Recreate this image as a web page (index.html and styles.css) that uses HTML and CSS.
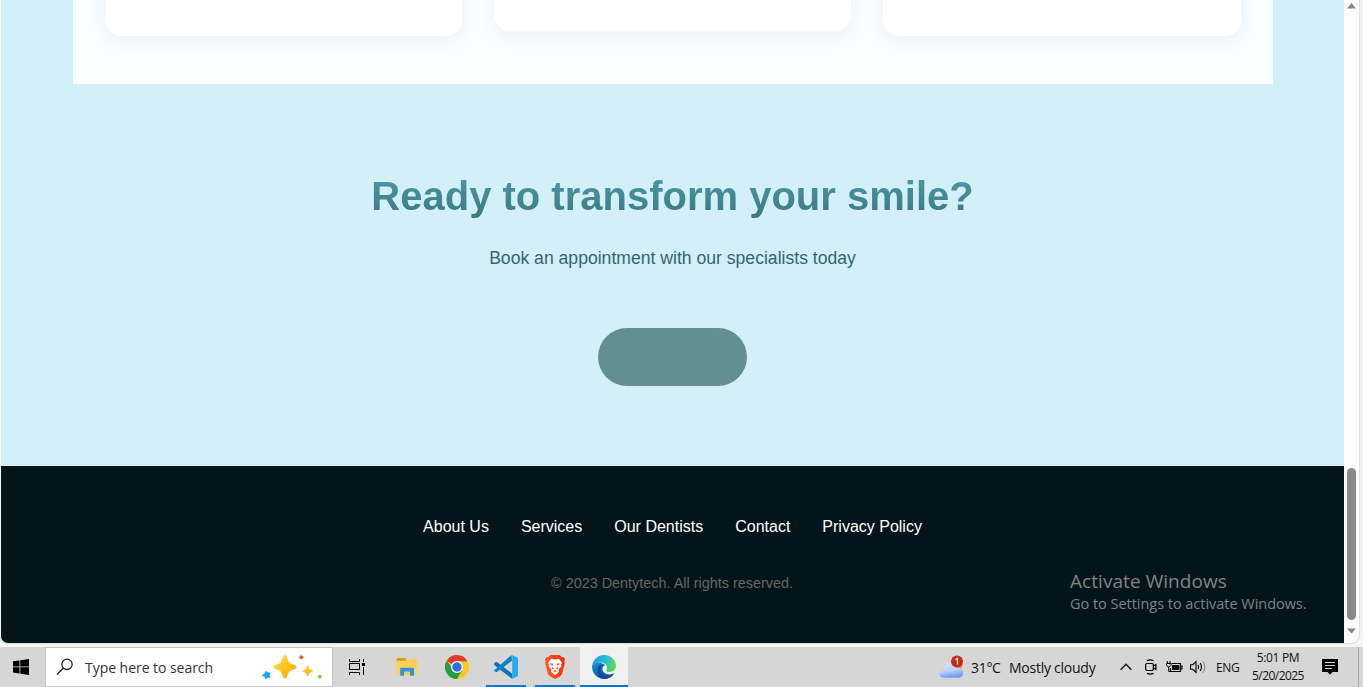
FILE: index.html
```html
<!DOCTYPE html>
<html lang="en">
<head>
<meta charset="utf-8">
<title>Dentytech</title>
<link rel="stylesheet" href="styles.css">
</head>
<body>
<div class="browser">
  <div class="page">
    <main class="content">
      <section class="cards">
        <div class="card"></div>
        <div class="card card-short"></div>
        <div class="card"></div>
      </section>
      <section class="cta">
        <h2 class="cta-title">Ready to transform your smile?</h2>
        <p class="cta-text">Book an appointment with our specialists today</p>
        <a class="cta-button"></a>
      </section>
    </main>
    <footer class="footer">
      <nav class="links">
        <a>About Us</a><a>Services</a><a>Our Dentists</a><a>Contact</a><a>Privacy Policy</a>
      </nav>
      <p class="copyright">© 2023 Dentytech. All rights reserved.</p>
    </footer>
  </div>
  <div class="scrollbar">
    <svg width="9" height="6" viewBox="0 0 9 6"><path d="M0 5.5 4.5 0 9 5.5z" fill="#858585"/></svg>
    <div class="thumb"></div>
    <svg width="9" height="6" viewBox="0 0 9 6"><path d="M0 .5 4.5 5.5 9 .5z" fill="#858585"/></svg>
  </div>
  <div class="watermark">
    <div class="wm-title">Activate Windows</div>
    <div class="wm-text">Go to Settings to activate Windows.</div>
  </div>
</div>
<div class="taskbar">
  <div class="start">
    <svg width="16" height="16" viewBox="0 0 16 16"><path d="M0 2.3 6.5 1.4V7.4H0zM7.3 1.3 16 0V7.4H7.3zM0 8.2H6.5V14.5L0 13.6zM7.3 8.2H16V16L7.3 14.7z"/></svg>
  </div>
  <div class="search">
    <svg class="glass" width="18" height="18" viewBox="0 0 18 18"><circle cx="11" cy="6.3" r="5.2" fill="none" stroke="#222" stroke-width="1.3"/><path d="M7.4 10.1 1 16.5" stroke="#222" stroke-width="1.4"/></svg>
    <span class="search-text">Type here to search</span>
    <svg class="sparkle" width="62" height="26" viewBox="0 0 62 26">
      <defs><linearGradient id="gold" x2="1" y2="1"><stop offset="0" stop-color="#ffe052"/><stop offset=".55" stop-color="#fdc01e"/><stop offset="1" stop-color="#efa30e"/></linearGradient></defs>
      <path d="M24 1C25.7 1 26.1 3.2 27.2 6.2 28 8.5 29 9.4 31.5 10.2 34 11 35.5 11.5 35.5 13S34 15 31.5 15.8C29 16.6 28 17.5 27.2 19.8 26.1 22.8 25.6 24.5 24 24.5S21.9 22.8 20.8 19.8C20 17.5 19 16.6 16.5 15.8 14 15 12.7 14.5 12.7 13S14 11 16.5 10.2C19 9.4 20 8.5 20.8 6.2 21.9 3.2 22.4 1 24 1z" fill="url(#gold)"/>
      <path d="M46.5 11.2C47.4 11.2 47.7 14.6 49 15.3 50.2 16 52.2 16 52.2 16.8S50.2 17.7 49 18.4C47.7 19.1 47.4 22 46.5 22S45.3 19.1 44 18.4C42.8 17.7 41.3 17.6 41.3 16.8S42.8 16 44 15.3C45.3 14.6 45.7 11.2 46.5 11.2z" fill="url(#gold)"/>
      <path d="M5.2 17 6.6 19 9.2 18.8 8.3 21.3 9.2 23.4 6.4 23.2 4.6 25 3.8 22.6 1.2 21.2 3.7 19.9z" fill="#18a7ee" stroke="#18a7ee" stroke-width=".8" stroke-linejoin="round"/>
      <circle cx="40.3" cy="3.2" r="2" fill="#f05d2d"/><circle cx="58.7" cy="22.8" r="2" fill="#8acb46"/>
    </svg>
  </div>
  <div class="app app-wide task-view">
    <svg width="17" height="16" viewBox="0 0 17 16" fill="none" stroke="#000" stroke-width="1"><path d="M1.5 0V2.5H11.5V0M1.5 16V13.5H11.5V16M1.5 4.5H11.5V10.5H1.5zM15.5 0V3M15.5 8V16"/><path d="M14 4H17V7H14z" fill="#000" stroke="none"/></svg>
  </div>
  <div class="app app-wide">
    <svg width="22" height="18" viewBox="0 0 22 18"><path d="M.3 2.3H9.5L11.2 1.2H20.5Q21.6 1.2 21.6 2.4V16Q21.6 17 20.6 17H1.3Q.3 17 .3 16z" fill="#ffd05a"/><path d="M.5 1Q.5 0 1.5 0H8.7Q10 0 10 1.2T8.8 2.8H.5z" fill="#de9a08"/><path d="M4.2 17.7V11Q4.2 9.7 5.4 9.7H16.7Q18 9.7 18 11V17.7H14V14.3Q14 13.4 13.2 13.4H9Q8.1 13.4 8.1 14.3V17.7z" fill="#3491dc"/></svg>
  </div>
  <div class="app app-wide">
    <svg width="24" height="24" viewBox="0 0 24 24"><circle cx="12" cy="12" r="12" fill="#fdc91c"/><path d="M12 12 1.6 6A12 12 0 0 1 22.4 6.2H12z" fill="#df3c2d"/><path d="M1.6 6A12 12 0 0 0 12 24L17.2 15H12Q8.5 15 6.8 12z" fill="#249b46"/><circle cx="12" cy="12" r="6" fill="#fff"/><circle cx="12" cy="12" r="4.7" fill="#2d6ee8"/></svg>
  </div>
  <div class="app running">
    <svg width="24" height="24" viewBox="0 0 24 24"><path d="M0 8.6 1.8 7.1Q2.6 6.7 3.3 7.2L18 18.4V23.8L.2 9.9Q-.4 9.2 0 8.6z" fill="#0876bb"/><path d="M0 15.5 17.5 0 18 5.7 3.3 16.8Q2.6 17.3 1.8 16.9L.2 15.9z" fill="#0b83c9"/><path d="M17.8 0 23.1 2.5Q24 3 24 4V20Q24 21 23.1 21.5L17.8 24Q18.2 23.5 18.2 22.5V1.5Q18.2.5 17.8 0z" fill="#29a8f2"/></svg>
  </div>
  <div class="app running">
    <svg width="20" height="24" viewBox="0 0 20 24"><defs><linearGradient id="brave"><stop stop-color="#ff5a20"/><stop offset="1" stop-color="#f72b0d"/></linearGradient></defs><path d="M5.3 0H14.7L16.8 2.2 18.5 2 20 4.3 19.3 6.3 19.8 8 17.2 18.2Q16.8 19.8 15.3 20.9L10 24 4.7 20.9Q3.2 19.8 2.8 18.2L.2 8 .7 6.3 0 4.3 1.5 2 3.2 2.2z" fill="url(#brave)"/><path d="M6.2 3.8 10 4.5 13.8 3.8 17 7.7 16 9.7 16.5 11.5 13.4 14.6 14 16.8 10 20.5 6 16.8 6.6 14.6 3.5 11.5 4 9.7 3 7.7z" fill="#fff"/><path d="M5.2 8.2 8.4 8.8 7.8 10.4 6.2 10zM14.8 8.2 11.6 8.8 12.2 10.4 13.8 10zM7.3 11.5 9 13.7 7.2 14.6zM12.7 11.5 11 13.7 12.8 14.6zM7.8 16 10 15.2 12.2 16 10 17z" fill="#fb401a"/></svg>
  </div>
  <div class="app active">
    <svg width="24" height="24" viewBox="0 0 24 24"><defs><linearGradient id="edgeTop" x1="0" x2="1" y1=".3" y2=".6"><stop stop-color="#2498dd"/><stop offset=".5" stop-color="#27bdd0"/><stop offset="1" stop-color="#63dc55"/></linearGradient><linearGradient id="edgeSide" x2=".7" y2="1"><stop stop-color="#1689d5"/><stop offset="1" stop-color="#0c59a8"/></linearGradient></defs><path d="M0 12C0 9 4 7 8.5 7.5L13 10 12.5 16 17 19.5 22.2 18.2A12 12 0 0 1 0 12z" fill="url(#edgeSide)"/><path d="M.1 11A12 12 0 0 1 12 0C18.5 0 24 4.8 24 11 24 14.8 21 17 17.5 17 14.8 17 13.5 16 14.3 14.6 16 11.5 13.8 7.5 8.5 7.5 4.5 7.5 1.5 9 .1 11z" fill="url(#edgeTop)"/><path d="M12.3 10C9.3 10.3 8.2 12.5 8.5 15 8.8 18.2 11.8 20.6 15.5 20.6 18.5 20.6 21 19.3 22.2 18.2A12 12 0 0 1 11.5 24C6.5 22.8 4.9 18.5 5.4 14.5 5.8 11.5 8.5 9.2 12.3 10z" fill="#124b91"/><path d="M12.2 10.7C9.6 12 10.2 16 12.5 17.8 15.4 20.3 20.3 19.5 23 16.7 20.7 18.1 15.5 18.1 14.3 16 13.8 15 15.4 14 14.7 12 14.3 11 13.4 10.2 12.2 10.7z" fill="#f1f2f2"/></svg>
  </div>
  <div class="weather">
    <svg width="26" height="26" viewBox="0 0 26 26"><defs><linearGradient id="cloud" x2=".3" y2="1"><stop stop-color="#d8e9ff"/><stop offset=".6" stop-color="#b8d2fa"/><stop offset="1" stop-color="#709eeb"/></linearGradient></defs><circle cx="17.5" cy="11" r="6" fill="#f58b23"/><path d="M5.3 23.8C2 23.8 0 21.9 0 19.5 0 17 2 15.2 4.6 15.3 5 11 7.8 8.8 11 8.8 14.2 8.8 16.8 11 17.5 14 21.4 12.7 24.2 15.5 24.2 18.7 24.2 21.8 22 23.8 19 23.8z" fill="url(#cloud)"/><circle cx="18" cy="7.5" r="6" fill="#c42b1c"/><path d="M16.5 5.8 18.5 4.4V10.4" fill="none" stroke="#fff" stroke-width="1.1"/></svg>
    <span class="temp">31°C</span><span class="sky">Mostly cloudy</span>
  </div>
  <svg class="chevron" width="12" height="8" viewBox="0 0 12 8"><path d="M.6 6.8 6 1.3 11.4 6.8" fill="none" stroke="#111" stroke-width="1.3"/></svg>
  <svg class="meet" width="12" height="16" viewBox="0 0 12 16" fill="none" stroke="#000" stroke-width="1.2"><rect x=".7" y="4.5" width="7.6" height="7" rx="1.2"/><path d="M8.5 7 10.9 5.5V10.5L8.5 9M2 1.8Q5 0 8.6 1.8M2 14.2Q5 16 8.6 14.2"/></svg>
  <svg class="battery" width="17" height="12" viewBox="0 0 17 12"><path d="M5.5 2.5H14.5V10.5H4.5V7M14.5 5H16V8H14.5" fill="none" stroke="#000" stroke-width="1.1"/><path d="M6 4H13.3V9H6z"/><path d="M1.3 0V2M4 0V2M.5 2.5H5V4.2Q4.5 5.8 2.7 5.8T.5 4.2zM2.7 6V10.5H5" fill="none" stroke="#000"/></svg>
  <svg class="volume" width="17" height="14" viewBox="0 0 17 14" fill="none" stroke="#000" stroke-width="1.1"><path d="M.6 4.7H2.8L6 1.6V12.4L2.8 9.3H.6zM8 4.8Q9.4 7 8 9.2M10.2 3Q12.7 7 10.2 11"/><path d="M12.8 1.2Q16.8 7 12.8 12.8" stroke="#888"/></svg>
  <span class="lang">ENG</span>
  <div class="clock"><span class="time">5:01 PM</span><span class="date">5/20/2025</span></div>
  <svg class="notes" width="16" height="16" viewBox="0 0 16 16"><path d="M0 0H16V13H10.5L8 15.8 5.5 13H0z"/><path d="M3 3.5H13M3 6.5H13M3 9.5H10" stroke="#d6d6d6" stroke-width="1"/></svg>
  <div class="desktop-edge"></div>
</div>
</body>
</html>
```

FILE: styles.css
```css
* { box-sizing: border-box; }
body {
  margin: 0;
  width: 1363px;
  height: 687px;
  overflow: hidden;
  background: #f4f4f4;
  font-family: "Liberation Sans", Arial, sans-serif;
  display: flex;
  flex-direction: column;
  justify-content: space-between;
}
.browser {
  position: relative;
  display: flex;
  width: 1359px;
  height: 643px;
  padding-left: 1px;
  background: #fcfcfc;
  border-bottom-left-radius: 8px;
  border-bottom-right-radius: 8px;
  box-shadow: 0 0 2px #aaa;
}
.page {
  width: 1343px;
  height: 643px;
  overflow: hidden;
  background: #d3eff7;
  border-bottom-left-radius: 7px;
}
.content { height: 466px; }
.cards {
  display: grid;
  grid-template-columns: repeat(3, 1fr);
  gap: 32px;
  align-items: start;
  width: 1200px;
  height: 84px;
  margin: 0 auto;
  padding: 0 32px 48px;
  background: #fafdff;
  overflow: hidden;
}
.card {
  height: 136px;
  margin-top: -100px;
  border-radius: 16px;
  background: #fff;
  box-shadow: 0 5px 20px rgba(0, 0, 0, .05);
}
.card-short { height: 131px; }
.cta {
  display: flex;
  flex-direction: column;
  align-items: center;
  padding-top: 89px;
}
.cta-title {
  margin: 0;
  font-size: 40px;
  line-height: 46px;
  white-space: nowrap;
  color: transparent;
  background: linear-gradient(#4a9ba5, #3d7780);
  -webkit-background-clip: text;
  background-clip: text;
}
.cta-text {
  margin: 28px 0 0;
  font-size: 17.6px;
  line-height: 22px;
  color: #33676f;
}
.cta-button {
  width: 149px;
  height: 58px;
  margin-top: 59px;
  border-radius: 29px;
  background: #648f90;
}
.footer {
  height: 177px;
  padding-top: 52px;
  background: #03151b;
  text-align: center;
}
.links {
  display: flex;
  justify-content: center;
  gap: 32px;
  font-size: 16px;
  line-height: 18px;
  color: #fff;
}
.copyright {
  margin: 39px 1px 0 0;
  font-size: 14.4px;
  line-height: 16px;
  color: #666;
}
.scrollbar {
  display: flex;
  flex-direction: column;
  align-items: center;
  width: 15px;
  padding: 3px 0 9px;
}
.thumb {
  width: 9px;
  height: 152px;
  margin-top: auto;
  margin-bottom: 8px;
  border-radius: 5px;
  background: #8a8a8a;
}
.watermark {
  position: absolute;
  left: 1070px;
  top: 568px;
  font-family: "Open Sans", "Noto Sans", sans-serif;
  color: #7d8486;
  white-space: nowrap;
}
.wm-title { font-size: 19px; line-height: 26px; letter-spacing: .06px; }
.wm-text { font-size: 14.5px; line-height: 20px; letter-spacing: -.03px; }
.taskbar {
  display: flex;
  align-items: center;
  height: 40px;
  background: #d6d6d6;
  font-family: "Open Sans", "Noto Sans", sans-serif;
  font-size: 14px;
  color: #111;
  white-space: nowrap;
}
.taskbar svg { display: block; flex: none; }
.start { width: 45px; padding-left: 13px; }
.search {
  display: flex;
  align-items: center;
  width: 288px;
  height: 40px;
  padding-left: 10px;
  border: 1px solid #c4c4c4;
  background: #fff;
}
.search-text { width: 176px; margin-left: 11px; color: #333; letter-spacing: -.04px; }
.app {
  display: flex;
  align-items: center;
  justify-content: center;
  width: 49px;
  height: 40px;
}
.app-wide { width: 49.5px; }
.task-view { padding-right: 2px; }
.running { background: linear-gradient(#0078d4, #0078d4) center bottom / 40px 2px no-repeat; }
.active {
  width: 48px;
  margin-left: .5px;
  background: #f0f0f0;
  border-bottom: 2px solid #0078d4;
  padding-top: 2px;
}
.weather { display: flex; align-items: center; width: 180px; margin-left: 311px; }
.temp { width: 38px; margin-left: 6px; letter-spacing: -.3px; }
.sky { letter-spacing: -.25px; }
.chevron { margin-left: 1px; }
.meet { margin-left: 13px; }
.battery { margin-left: 9px; }
.volume { margin-left: 7px; }
.lang { width: 25px; margin-left: 9px; font-size: 12px; letter-spacing: -.3px; }
.clock {
  display: flex;
  flex-direction: column;
  align-items: center;
  width: 54px;
  margin-left: 10px;
  font-size: 12px;
  line-height: 18px;
}
.time { letter-spacing: -.35px; }
.date { letter-spacing: -.55px; }
.notes { margin-left: 17px; }
.desktop-edge { width: 1px; height: 40px; margin-left: 20px; background: #a5a5a5; }
```
